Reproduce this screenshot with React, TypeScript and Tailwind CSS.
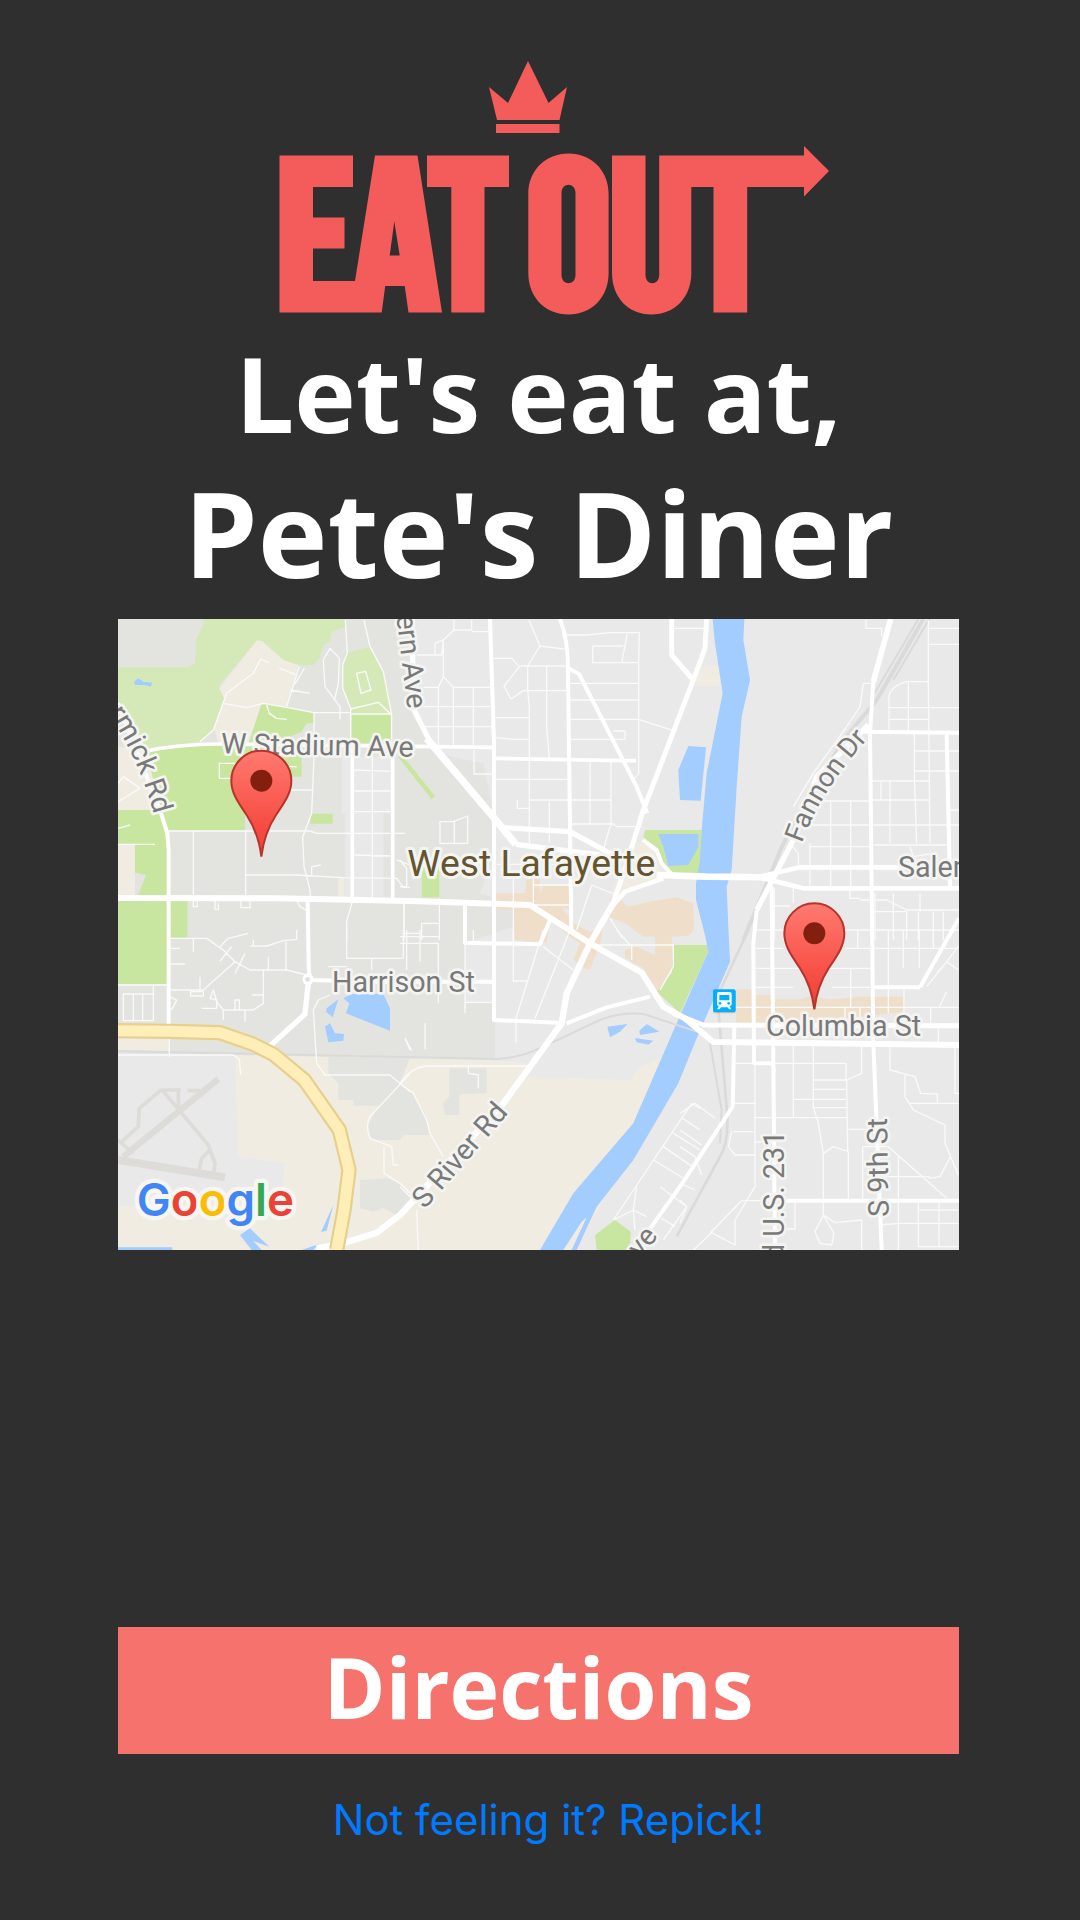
const TILES = {
  nw: "translate(0 0)",
  n: "translate(870 0)",
  ne: "translate(1710 0)",
  sw: "translate(0 960)",
  s: "translate(870 960)",
  se: "translate(1710 960)",
};

const lanes: { tile: keyof typeof TILES; d: string }[] = [
  {
    tile: "nw",
    d: "M476 158 452 147 430 190 350 250 310 360 270 395M340 280 410 293 460 280 530 292 612 308H724M508 175 560 195 530 290M568 170 555 210M583 175 555 222M540 240 600 250M706 30 712 128 698 165V235L722 295V400M762 30 780 110 820 185 845 315V400M660 115 640 150 645 230 690 290V328M660 115 688 145 685 220 675 265M722 297 805 277 842 312H724M740 190 767 184 783 240 753 250ZM470 285 478 310 500 325 530 328M612 310V440L605 610 578 680 582 770 600 840 602 870M328 460H375V505H328ZM24 575 90 535 40 500 24 520M24 655 60 645M24 703H135M175 663H600L620 670H885M250 663V862M407 663V862M407 795H560L700 803 860 805 880 832H900M540 540H605M727 480 848 484M727 543H848M727 605H848M727 735 848 738M787 415V862M605 800V770L632 765M860 750 900 765M250 870V890H262V870M315 870V898H325V880M393 870V893H420V870M560 870 570 890 600 908M727 875 710 935V990M882 880V990M530 575H480M560 470H530V520",
  },
  {
    tile: "n",
    d: "M50 135H125L130 90 162 60V30M162 60H215V30M215 65H270M130 90 105 100V135M130 90V200L160 232M130 200 115 232H70M160 232H270M115 232V410M160 232V410M220 232V410M70 290H270M70 350H275M387 30 420 108 383 168V240L388 290V700M420 108 500 118M280 145H335L358 170 312 228 333 267 370 242H500M358 168H500M440 168V350L448 450M285 323H388M285 383 340 388H388M500 75H560L630 68H718L716 160V490M578 108H670M578 108V158H716M682 70 665 158M510 220H716M510 270H716M510 328H716L820 362M510 388H675V363H640M222 420V492H285M285 508H510M352 570V595H388V570H635M570 450V640M633 455V650M448 575V700M510 642H640L650 650H725M630 650 610 720M716 452V490L700 510M120 635H160L203 618V700H120ZM163 635V700M290 763H510M340 800V990M400 770V885M300 885H510M400 825H510M118 865V990M12 870V980M12 970H60M118 940H65V990M575 825 530 960M575 825 650 855M630 925 668 985M0 750 20 775V830H0M815 55H900M725 690 770 730",
  },
  {
    tile: "ne",
    d: "M0 55H78M558 30V55H605V80M550 220H575M550 220 540 290 500 350 400 490 340 590M745 30V220L750 700M745 103H838M745 55H838M745 215H680Q630 230 627 260V362M627 293H838M627 328H745M685 218V362M703 370V500L710 700M703 423H838M703 483H838M575 513H750M603 513V570M630 513V700M420 573H575M575 570H750M452 573V830M512 573V830M395 645H838M390 700V830M390 710H575M575 705H800M808 600H838M338 710 355 730V765M283 835V990M340 835V880M283 888H330M510 835V865H540M540 870H620L680 900H838M585 905H680V990M640 850V990M715 905V990M760 905V990M790 905V990M720 850V905M585 960H838M585 850V990M225 960H310M495 960H580M533 960V990M690 710 700 740 760 730",
  },
  {
    tile: "sw",
    d: "M180 25H290L340 60 375 95 420 120H530L590 135M250 25V65M180 55H210M180 102H225M180 180H280L375 95M242 185H280V198H242ZM270 140V185M365 50 330 93M405 70 375 130M330 50 355 25 415 10M422 48H470L520 32 560 28V0M430 30V48M475 80V118M528 35V118M460 120V220L430 240H340L320 215 310 180 300 205 320 210V235H275M340 240V270M405 240V275M375 210H388V240H375ZM425 195H460V210M24 165H175M40 192H130V272H40ZM70 192V272M98 192V272M130 165V195M178 320V380M24 375H370L388 388 392 435M180 200 200 210 185 240M710 0V85H880M880 0V85M785 85V120M655 110H710M660 195 625 210 610 240 620 400 645 435H840L900 485M900 430 850 485 780 560Q765 590 780 625L845 650 850 705H865M822 650V730L870 760 900 790M885 325 900 360",
  },
  {
    tile: "s",
    d: "M0 460Q30 415 75 408H380M0 460 40 490 80 570 90 610 130 680M205 410V430L235 435V475M50 840 55 960M0 770 50 820M75 280V358M15 325 35 362M340 0V153H380M195 40V250M195 217H285M348 340V265L430 0M405 265 510 0M430 50 520 120M580 45H820L820 110 780 180M695 45V90M650 0 690 45M875 520 640 870M875 520 900 535M848 565 900 600M820 610 900 660M790 650 885 715M760 690 860 750M780 770 860 830 790 930M785 865 825 890M710 770 700 840 740 860M640 870 700 840 705 900M20 0V120M60 0V95M0 20H115M0 40H115V220M220 0V40",
  },
  {
    tile: "se",
    d: "M228 55H310M495 55H835M225 115H360M440 115H580M225 172H340M455 172H580M512 115V230M533 0V55M625 0V250M670 0V115M718 0V115M760 0V55M165 232H835M495 232V280M540 232V265M672 172V280M752 232V280M778 232 800 185M775 290V340M165 400H225M285 400H498V450H400V345M340 345V563M225 563H500M340 508H498M400 478H498M400 533H498M400 450V533L415 580 430 670 460 650 505 665V810M500 450 545 430V345M500 450 503 665M430 670V810M630 345V420L705 440 722 490 772 492V520H835M675 430V500L700 540 795 585V640L812 680 835 735M690 520H835M812 680 780 740 745 745M548 650V810M548 650H625L800 805M655 680V960M600 740H750M505 598H590M225 636H285M165 520H225M160 605H220M225 400V770L165 870V945L95 908 40 960M225 675H165L145 650 155 605M185 812H290M185 812 90 910M345 812V897H320M430 812V855L405 905 420 940 455 945 462 910 430 855M430 855 465 878 545 870V960M600 885 655 880H835M715 812V950H835M777 812V950M718 840H835M0 550 45 520 105 565M0 600 65 645M0 650 45 680 65 735M0 760 45 780M0 880 20 830 0 810M825 345V490H838M800 95 835 120M800 95 740 170M835 50 800 95 770 130",
  },
];

const streets = [
  { w: 11, d: "M100 425Q200 402 330 402L1150 412M1155 445 1540 452M1540 452 1578 452" },
  { w: 12, d: "M24 280 150 600 172 670 176 720V1250" },
  { w: 11, d: "M727 415V862M848 415V868" },
  { w: 12, d: "M1140 27 1152 400V1230L1345 1238M1350 27Q1375 90 1374 180L1384 960M1375 175 1407 192 1580 530 1612 610" },
  { w: 15, d: "M1685 27V135L1750 210" },
  { w: 15, d: "M1790 27 1785 115 1750 210 1600 600 1550 760 1510 880" },
  { w: 19, d: "M1510 880 1440 1000 1370 1150 1355 1240 1180 1480M1180 1480 870 1815 800 1868 700 1900 620 1915" },
  { w: 16, d: "M905 27 912 300 960 395" },
  { w: 22, d: "M950 385 1170 645 1217 703" },
  { w: 16, d: "M1217 703 1470 735M1170 652 1380 665 1510 735" },
  { w: 18, d: "M24 864 500 865 900 873 1260 885 1440 1000 1595 1088 1660 1190 1725 1225 1810 1296 2547 1305" },
  { w: 15, d: "M1690 1210 1780 1245 2547 1247" },
  { w: 12, d: "M1600 690 1640 720 1655 760 1690 797" },
  { w: 20, d: "M1640 795 1790 800 1985 802" },
  { w: 14, d: "M1940 802 2070 772H2547M1940 800 2080 835H2547M1510 885 1545 845 1660 805" },
  { w: 12, d: "M1370 1240 1490 1192 1620 1160M1065 885V998L1290 1003 1320 930M593 870 596 1070 598 1110 800 1115 1155 1115" },
  { w: 16, d: "M598 1090 585 1212 480 1308" },
  { w: 17, d: "M2342 27 2290 215" },
  { w: 12, d: "M2290 215 2280 370 2290 1300 2315 1920M2250 365 2547 368M2510 370 2520 830M2430 1132H2290M2547 925 2430 1132" },
  { w: 16, d: "M2275 345 2120 500 2050 690 1940 900" },
  { w: 12, d: "M1940 900 1930 1000 1932 1360H1980Q1992 1362 1992 1385M1985 830 1990 1360 1995 1920M2020 1772H2547M1873 1250 1868 1490 1710 1730 1610 1870" },
];

const areas: { fill: string; d: string }[] = [
  { fill: "#e3e4df", d: "M24 27H860L905 60 912 300 960 410 1025 440 1120 460 1155 640V730L1110 850 1210 880V950L1065 1000V1160L1155 1180V1350L655 1345 24 1330Z" },
  { fill: "#d5e9b8", d: "M280 27H706V50L665 65 660 95 640 105 630 140 612 165H560L515 150 455 92H440L328 225 343 268 312 355 270 395 110 420 24 270V172H235L255 160 258 90 280 45Z" },
  { fill: "#f0ece2", d: "M440 92H455L520 150 565 165 530 290 455 282 415 400H325L312 355 343 268 328 235Z" },
  { fill: "#d5e9b8", d: "M712 128 780 110 820 185 845 315H722V295L698 235V165Z" },
  { fill: "#c9e6a1", d: "M724 313H842V400H724ZM455 282 530 290 612 310V340H590L575 365 540 380 480 400H415ZM110 425 260 405H540L575 440V500H405V662H175L150 600Z" },
  { fill: "#f0ece2", d: "M24 410 110 425 150 600H24ZM24 700H75V860H24ZM685 805H703V860H685Z" },
  { fill: "#c9e6a1", d: "M24 600H150L175 662V860H82L108 795 75 788V702H24ZM24 870H232V983H175V1122H24ZM603 611H668V641H600ZM935 770H988V862H935ZM862 438 880 440 975 558 965 568Z" },
  { fill: "#e9e9e9", d: "M695 440H850V610H820V860H705V610H695ZM1065 1020H1155V1180H1065Z" },
  { fill: "#f0ece2", d: "M24 1285H180V1325H24ZM375 1335 650 1340 1155 1350 1250 1360 1255 1400 1560 1410 1590 1370 1670 1335 1640 1450 1400 1920H24V1790L515 1760 525 1660 385 1640ZM1770 170 1840 165 1830 228H1750ZM1500 860 1560 720 1600 690 1640 740 1660 810Z" },
  { fill: "#e3e4df", d: "M655 1340H900L870 1420 810 1487H730V1470H685V1420L655 1390ZM875 1420 900 1440 945 1510 960 1575H880L870 1590H785L772 1545 800 1500ZM1018 1375H1130V1450L1048 1453V1515H1005L998 1480 1018 1460ZM750 1710 830 1705 870 1720 900 1760V1790L860 1815 820 1795 790 1805 750 1795Z" },
  { fill: "#efdfca", d: "M1155 850H1245L1250 800H1290V850L1300 828H1377L1380 900 1355 890 1390 940 1440 965 1480 950 1470 1000 1440 1080 1425 1075 1390 1050 1410 1000 1380 980 1320 930 1310 1000 1215 990 1210 900 1155 895ZM1510 880 1535 870 1550 890 1620 875 1700 862 1750 880 1752 960 1735 977 1685 980 1690 1045 1680 1100 1645 1147 1600 1075 1545 1045V1020L1580 1010 1635 1035V980H1600L1545 940 1495 920ZM1878 1138H1925V1155H1980L1995 1168H2070L2100 1158 2160 1168 2260 1160H2385V1205L2160 1230 2100 1262 1878 1240Z" },
  { fill: "#c9e6a1", d: "M1605 660H1775V790H1680L1650 740 1600 680ZM1690 1005H1795V1025L1710 1210 1640 1145 1685 1090ZM1455 1875 1515 1830 1562 1865 1560 1920H1460Z" },
  { fill: "#a3ccff", d: "M1645 672H1765V710L1735 765 1675 768 1660 710ZM1808 27 1815 100 1838 250 1790 490 1775 660 1770 750 1758 820V870L1785 975 1795 1025 1715 1205 1570 1540 1390 1750 1290 1920H1400L1460 1790 1570 1650 1705 1420 1760 1285 1860 1055 1855 950 1850 830 1865 780 1880 530 1895 320 1920 210 1900 90 1903 27ZM1735 408 1788 412 1772 572 1710 570 1705 480Z" },
  { fill: "#a3ccff", d: "M700 1165 725 1152H820L840 1195V1262L708 1210 718 1180ZM650 1195 685 1168 668 1222 648 1205ZM645 1250 660 1240 675 1270 702 1272 700 1292 655 1297ZM1492 1250 1552 1242 1530 1265 1500 1282ZM1588 1262 1610 1242 1648 1265 1590 1275ZM1575 1284 1630 1292 1615 1304 1580 1297ZM72 215 85 205 100 215 127 218 122 230 105 225 75 225ZM24 1912H187V1920H24ZM390 1875 420 1855 478 1910 430 1893 455 1920H425ZM670 1785 650 1862 633 1866ZM575 1920 625 1903 610 1920Z" },
  { fill: "#f0ece2", d: "M1360 1920 1415 1835 1430 1822 1385 1920Z" },
];

const label = {
  fontFamily: "Roboto, sans-serif",
  fontSize: 86,
  fill: "#797979",
  stroke: "#f4f4f2",
  strokeWidth: 16,
  strokeLinejoin: "round" as const,
  paintOrder: "stroke",
};

function Pin({ x, y }: { x: number; y: number }) {
  return (
    <g transform={`translate(${x} ${y})`}>
      <path
        d="M0 0C-6-50-18-85-44-125-69-162-90-190-90-228A90 90 0 0 1 90-228C90-190 69-162 44-125 18-85 6-50 0 0Z"
        fill="url(#pin)"
        stroke="#b5342c"
        strokeWidth="6"
      />
      <circle cy="-228" r="33" fill="#821f0e" />
    </g>
  );
}

function CityMap() {
  return (
    <svg viewBox="24 27 2523 1893" className="block h-auto w-full" role="img" aria-label="Map of West Lafayette">
      <defs>
        <linearGradient id="pin" x1="0" y1="0" x2="0" y2="1">
          <stop offset="0" stopColor="#ff7a70" />
          <stop offset="0.75" stopColor="#f64a40" />
          <stop offset="1" stopColor="#e8453c" />
        </linearGradient>
        <path id="fannon" d="M2076 700Q2125 560 2240 425L2310 345" />
        <path id="mccormick" d="M-70 210 20 350Q95 475 132 614" />
        <path id="northwestern" d="M856 -60 862 40 893 298" />
      </defs>
      <rect x="24" y="27" width="2523" height="1893" fill="#e9e9e9" />
      {areas.map((a) => (
        <path key={a.d} d={a.d} fill={a.fill} />
      ))}
      <g fill="none" stroke="#dddcd8">
        <path d="M325 1407 40 1640" strokeWidth="19" />
        <path d="M24 1650 345 1702" strokeWidth="24" />
        <path d="M155 1438 88 1495 85 1550 30 1600M155 1438 295 1605 315 1660 312 1690M155 1440H212M232 1442H270M205 1440V1500M268 1680 275 1645 300 1620M24 1590 70 1630" strokeWidth="11" />
      </g>
      <g fill="none" stroke="#dadada" strokeWidth="6">
        <path d="M24 1323 600 1335 1155 1347Q1230 1345 1300 1310L1470 1230Q1530 1205 1600 1212L1770 1268" />
        <path d="M1915 960 1822 1160 1852 1520Q1855 1600 1830 1640L1700 1880" strokeWidth="8" />
        <path d="M1800 1300 1835 1500 1830 1600" />
        <path d="M2440 27 2300 270 2200 390 2020 700 1900 990" strokeWidth="12" />
        <path d="M2425 27 2285 265M2458 27 2350 210" />
      </g>
      <g fill="none" stroke="#fafafa" strokeWidth="4" strokeLinejoin="round">
        {lanes.map((l) => (
          <path key={l.tile} transform={TILES[l.tile]} d={l.d} />
        ))}
      </g>
      <g fill="none" stroke="#ffffff" strokeLinejoin="round">
        {streets.map((s) => (
          <path key={s.d} d={s.d} strokeWidth={s.w} />
        ))}
      </g>
      <circle cx="594" cy="1108" r="17" fill="#fff" />
      <circle cx="593" cy="1108" r="7" fill="#dedfda" />
      <g fill="none" strokeLinejoin="round">
        <path d="M24 1262 176 1264 330 1268 428 1302 490 1333 583 1410 688 1560 717 1680 702 1800 680 1920" stroke="#e7cf8c" strokeWidth="46" />
        <path d="M24 1262 176 1264 330 1268 428 1302 490 1333 583 1410 688 1560 717 1680 702 1800 680 1920" stroke="#ffeeb8" strokeWidth="33" />
      </g>

      <g {...label}>
        <text x="333" y="430" transform="rotate(1 333 430)">W Stadium Ave</text>
        <text x="666" y="1145">Harrison St</text>
        <text x="1968" y="1277">Columbia St</text>
        <text x="2364" y="802">Salem St</text>
        <text transform="translate(944 1799) rotate(-49)">S River Rd</text>
        <text transform="translate(2022 1562) rotate(-90)" textAnchor="end">d U.S. 231</text>
        <text transform="translate(2336 1820) rotate(-91)">S 9th St</text>
        <text transform="translate(1646 1878) rotate(-52)" textAnchor="end">ve</text>
        <text fontSize="82"><textPath href="#fannon">Fannon Dr</textPath></text>
        <text textAnchor="end"><textPath href="#mccormick" startOffset="100%">rmick Rd</textPath></text>
        <text textAnchor="end"><textPath href="#northwestern" startOffset="100%">ern Ave</textPath></text>
      </g>
      <text {...label} x="892" y="798" fontSize="112" fill="#655430" strokeWidth="18">West Lafayette</text>

      <g transform="translate(1809 1138)">
        <rect y="4" width="68" height="68" rx="6" fill="#000" opacity="0.2" />
        <rect width="68" height="68" rx="6" fill="#00b0ff" />
        <path d="M18 8H50Q56 8 56 15V45Q56 50 50 50L55 60H48L44 54H24L20 60H12L18 50Q12 50 12 45V15Q12 8 18 8ZM19 17V33H49V17Z" fill="#fff" fillRule="evenodd" />
        <circle cx="21" cy="42" r="4" fill="#00b0ff" />
        <circle cx="47" cy="42" r="4" fill="#00b0ff" />
      </g>

      <Pin x={454} y={740} />
      <Pin x={2113} y={1198} />

      <text
        x="80"
        y="1817"
        fontFamily="Inter, sans-serif"
        fontWeight="600"
        fontSize="137"
        stroke="#f7f6f3"
        strokeWidth="26"
        strokeLinejoin="round"
        paintOrder="stroke"
      >
        <tspan fill="#4285f4">G</tspan>
        <tspan fill="#ea4335">o</tspan>
        <tspan fill="#fbbc05">o</tspan>
        <tspan fill="#4285f4">g</tspan>
        <tspan fill="#34a853">l</tspan>
        <tspan fill="#ea4335">e</tspan>
      </text>
    </svg>
  );
}

function Logo() {
  return (
    <svg viewBox="248 60 581 255" className="block h-auto w-[581px] max-w-full" fill="#f35c5b" role="img" aria-label="Eat Out">
      <path d="M528 61 548.500 103 567 87 559.500 120H497L489 87 508 103ZM496 124H559.500V133H496Z" />
      <path d="M279.500 155.500H353V187H313V217.500H344.500V248.500H313V281H355L375 155.500H417.500L442 312.500H408.500L404.700 286H385.200L381.700 312.500H279.500Z M394.300 221.500 389.700 255.500H399.700Z" fillRule="evenodd" />
      <path d="M427 155.500H509V187H484.500V312.500H451.300V187H427Z" />
      <path d="M528.300 194C528.300 170 546 153.500 568.500 153.500S608.600 170 608.600 194V273C608.600 298 591 314.500 568.500 314.500S528.300 298 528.300 273ZM561.500 193V275C561.500 286 575.500 286 575.500 275V193C575.500 182 561.500 182 561.500 193Z" fillRule="evenodd" />
      <path d="M612 155.500H645.500V275C645.500 286 659.200 286 659.200 275V155.500H804V146L829 171 804 196.500V187H747.200V312.500H713.500V187H691.300V273C691.300 298 674 314.500 651.500 314.500S612 298 612 273Z" />
    </svg>
  );
}

export default function App() {
  return (
    <main className="flex min-h-screen flex-col items-center bg-[#2f2f2f] pt-[60px] pr-[121px] pb-[72px] pl-[118px]">
      <Logo />
      <h1 className="mt-3 text-center font-['Open_Sans',sans-serif] font-bold whitespace-nowrap text-white">
        <span className="block text-[104px] leading-[132px]">Let's eat at,</span>
        <span className="block text-[118px] leading-[148px]">Pete's Diner</span>
      </h1>
      <div className="mt-3 w-full">
        <CityMap />
      </div>
      <button
        type="button"
        className="mt-auto h-[127px] w-full bg-[#f6736d] pb-2 font-['Open_Sans',sans-serif] text-[84px] leading-[100px] font-bold text-white"
      >
        Directions
      </button>
      <a href="#repick" className="mt-[38px] pl-5 font-['Inter',sans-serif] text-[42px] leading-[56px] text-[#007aff]">
        Not feeling it? Repick!
      </a>
    </main>
  );
}
